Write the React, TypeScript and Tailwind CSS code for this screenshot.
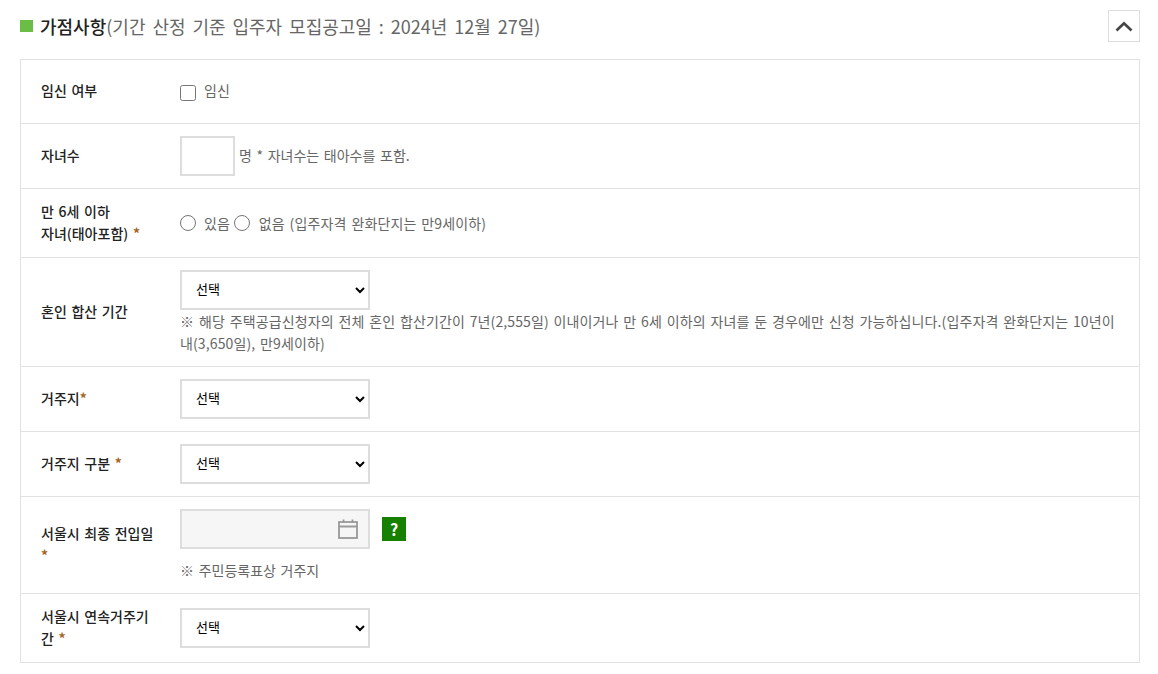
import React from 'react';

const FONT = 'font-["Malgun_Gothic","Noto_Sans_CJK_KR",sans-serif]';

function Star() {
  return <span className="font-bold text-[#a5651f]">*</span>;
}

function Row({ label, children, last }: { label: React.ReactNode; children: React.ReactNode; last?: boolean }) {
  return (
    <div className={`flex ${last ? '' : 'border-b border-[#e1e1e1]'}`}>
      <div className="flex w-[159px] shrink-0 items-center py-3 pl-5 pr-2 text-[14px] leading-[22px] font-medium text-[#222] [word-spacing:1.5px]">
        <div className="relative top-[-1px] w-[118px]">{label}</div>
      </div>
      <div className="min-w-0 flex-1 py-3 pr-5 text-[14px] leading-[22px] text-[#666] [word-spacing:1.5px]">{children}</div>
    </div>
  );
}

function Select() {
  return (
    <select className="block h-10 w-[190px] border-2 border-[#ddd] bg-white pb-[4px] pl-[10px] text-[13px] text-black">
      <option>선택</option>
    </select>
  );
}

export default function App() {
  return (
    <div className={`min-h-screen bg-white pl-[20px] pr-[18px] pt-[10px] ${FONT}`}>
      <div className="flex h-8 items-center justify-between">
        <h3 className="flex items-center text-[18px] text-[#666] [word-spacing:2.9px]">
          <span className="mr-[7px] h-[12px] w-[13px] bg-[#6cbd45]" />
          <b className="font-medium text-[#222]">가점사항</b>(기간 산정 기준 입주자 모집공고일 : 2024년 12월 27일)
        </h3>
        <button className="flex h-8 w-8 items-center justify-center border border-[#ddd] bg-white">
          <svg width="18" height="11" viewBox="0 0 18 11" fill="none" stroke="#444" strokeWidth="2.6">
            <path d="M1.5 9.5 L9 2.2 L16.5 9.5" />
          </svg>
        </button>
      </div>
      <div className="mt-[17px] w-[1120px] border border-[#e1e1e1]">
        <Row label={<span className="relative top-[-1px]">임신 여부</span>}>
          <label className="flex h-[39px] items-center">
            <input type="checkbox" className="m-0 h-4 w-4 translate-y-[1px]" />
            <span className="relative top-[-2px] ml-2">임신</span>
          </label>
        </Row>
        <Row label="자녀수">
          <div className="flex items-center">
            <input className="h-10 w-[55px] border-2 border-[#ddd] bg-white" />
            <span className="relative top-[-1px] ml-[4px]">명 * 자녀수는 태아수를 포함.</span>
          </div>
        </Row>
        <Row label={<>만 6세 이하<br />자녀(태아포함) <Star /></>}>
          <div className="flex h-[44px] items-center">
            <input type="radio" className="m-0 h-4 w-4" />
            <span className="ml-2">있음</span>
            <input type="radio" className="m-0 ml-[4px] h-4 w-4" />
            <span className="ml-[9px] tracking-[0.15px]">없음 (입주자격 완화단지는 만9세이하)</span>
          </div>
        </Row>
        <Row label="혼인 합산 기간">
          <Select />
          <p className="tracking-[0.12px]">※ 해당 주택공급신청자의 전체 혼인 합산기간이 7년(2,555일) 이내이거나 만 6세 이하의 자녀를 둔 경우에만 신청 가능하십니다.(입주자격 완화단지는 10년이내(3,650일), 만9세이하)</p>
        </Row>
        <Row label={<>거주지<Star /></>}>
          <Select />
        </Row>
        <Row label={<>거주지 구분 <Star /></>}>
          <Select />
        </Row>
        <Row label={<>서울시 최종 전입일 <Star /></>}>
          <div className="flex items-center">
            <div className="flex h-10 w-[190px] items-center justify-end border-2 border-[#ddd] bg-[#f6f6f6] pr-[10px]">
              <svg width="20" height="20" viewBox="0 0 20 20" fill="none" stroke="#999" strokeWidth="1.8">
                <rect x="1" y="3" width="18" height="16" />
                <path d="M1 7.5 H19 M5.5 0.5 V4 M14.5 0.5 V4" />
              </svg>
            </div>
            <button className="ml-3 flex h-6 w-6 items-center justify-center bg-[#178000] text-[16px] font-bold text-white">?</button>
          </div>
          <p className="mt-[10px]">※ 주민등록표상 거주지</p>
        </Row>
        <Row label={<>서울시 연속거주기간 <Star /></>} last>
          <div className="flex h-[44px] items-center">
            <Select />
          </div>
        </Row>
      </div>
    </div>
  );
}
